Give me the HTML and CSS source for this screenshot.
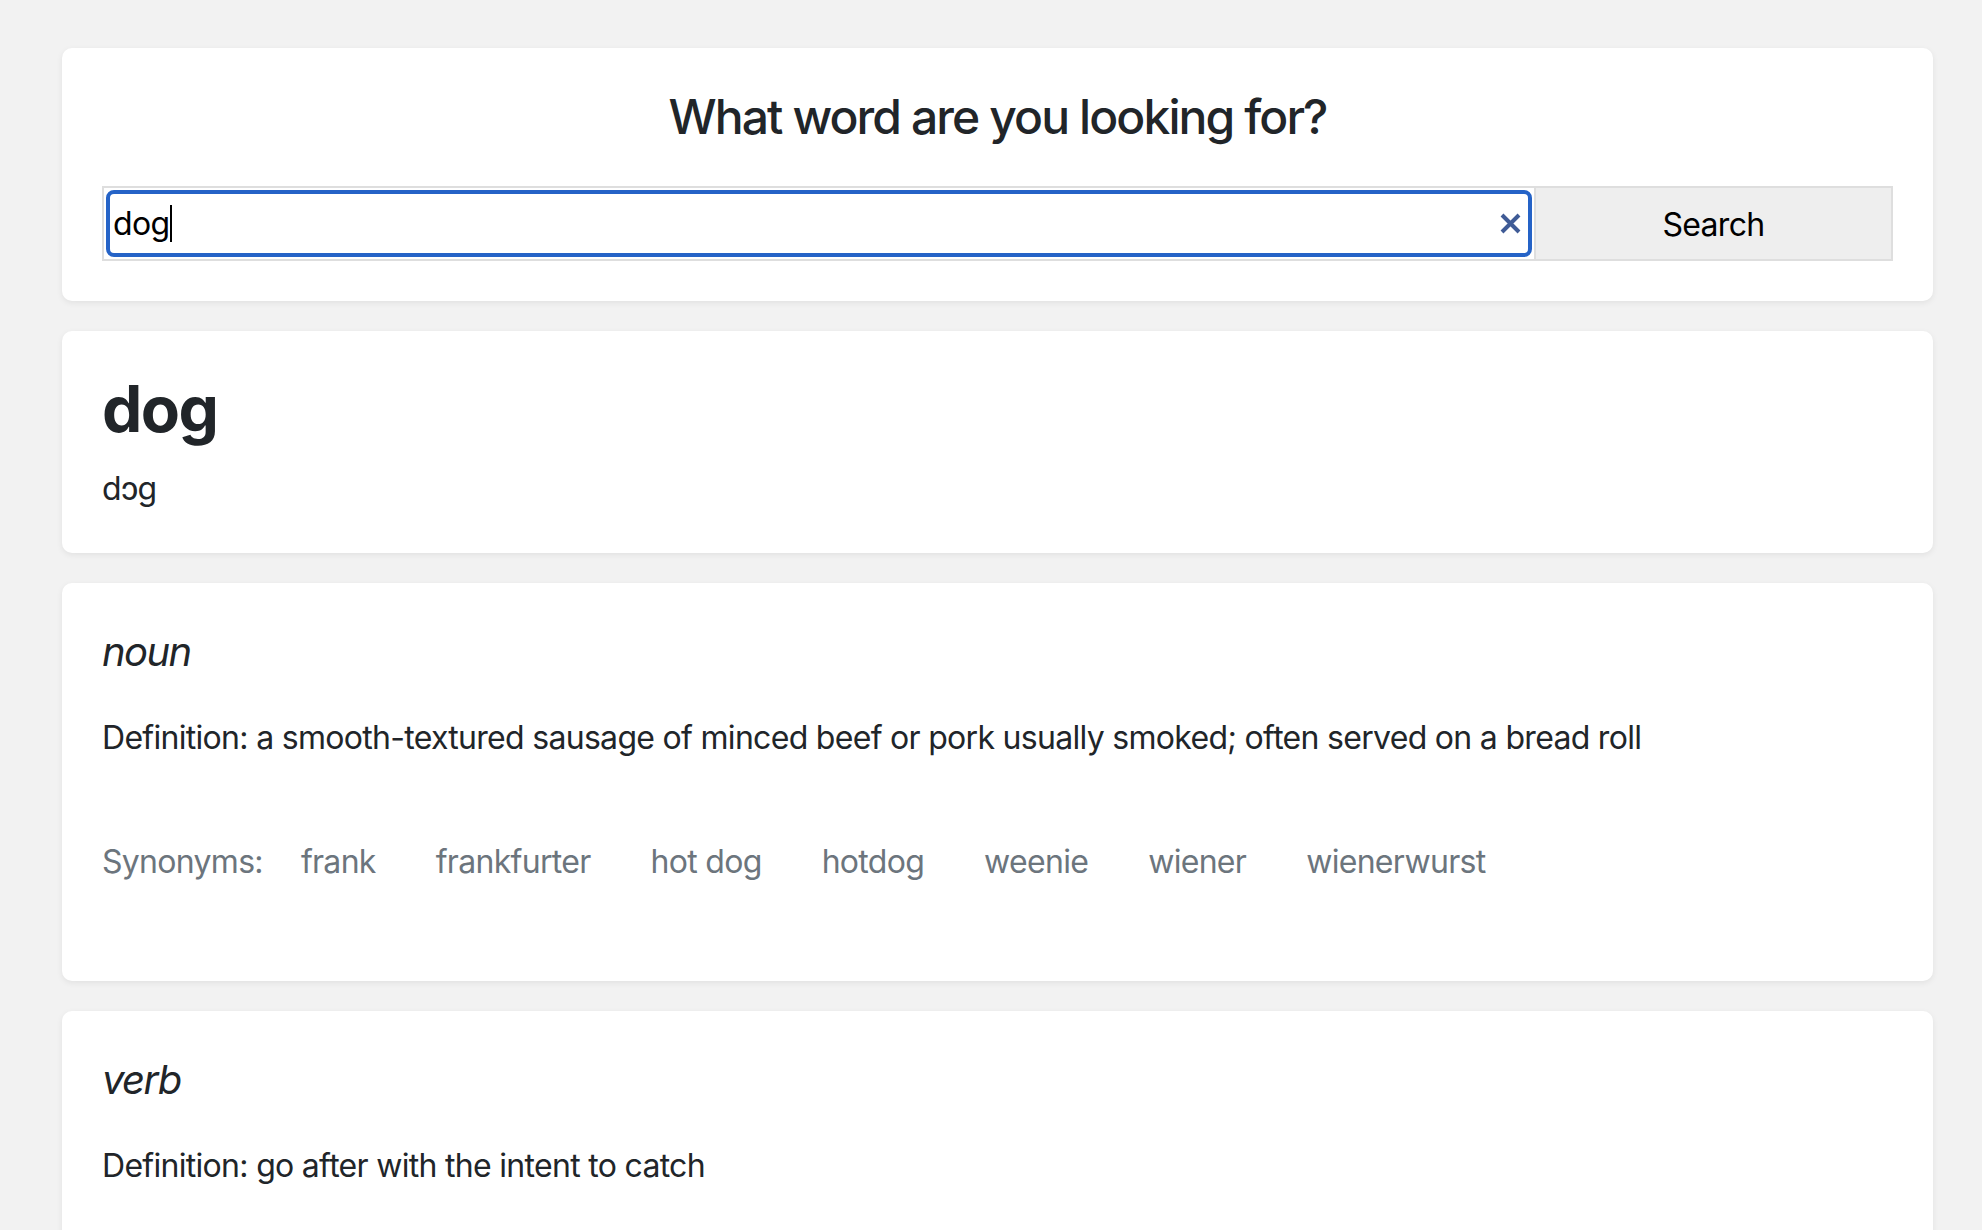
FILE: index.html
```html
<!DOCTYPE html>
<html lang="en">
<head>
<meta charset="utf-8">
<title>Dictionary</title>
<link rel="stylesheet" href="styles.css">
</head>
<body>
<main class="page">
  <section class="card search-card">
    <h2 class="search-title">What word are you looking for?</h2>
    <form class="search-row">
      <div class="field">
        <div class="field-inner">
          <span class="field-text">dog</span><span class="caret"></span>
          <span class="clear" aria-label="clear">
            <svg width="21" height="21" viewBox="0 0 21 21"><path d="M2 2 L19 19 M19 2 L2 19" stroke="#3f5b96" stroke-width="4" fill="none"/></svg>
          </span>
        </div>
      </div>
      <button type="button" class="search-btn">Search</button>
    </form>
  </section>

  <section class="card word-card">
    <h1 class="word">dog</h1>
    <p class="phonetic">dɔg</p>
  </section>

  <section class="card meaning-card">
    <h3 class="pos">noun</h3>
    <p class="definition">Definition: a smooth-textured sausage of minced beef or pork usually smoked; often served on a bread roll</p>
    <div class="synonyms">
      <span class="syn-label">Synonyms:</span>
      <span class="syn">frank</span>
      <span class="syn">frankfurter</span>
      <span class="syn">hot dog</span>
      <span class="syn">hotdog</span>
      <span class="syn">weenie</span>
      <span class="syn">wiener</span>
      <span class="syn">wienerwurst</span>
    </div>
  </section>

  <section class="card meaning-card last">
    <h3 class="pos">verb</h3>
    <p class="definition">Definition: go after with the intent to catch</p>
  </section>
</main>
</body>
</html>
```

FILE: styles.css
```css
* { box-sizing: border-box; }

html, body {
  margin: 0;
  background: #f2f2f2;
}

body {
  font-family: Inter, "Noto Sans", "Liberation Sans", sans-serif;
  font-size: 32px;
  line-height: 1.5;
  letter-spacing: -0.7px;
  color: #212529;
  overflow: hidden;
  height: 1230px;
}

.page {
  padding: 48px 49px 0 62px;
  display: flex;
  flex-direction: column;
  gap: 30px;
}

.card {
  background: #fff;
  border-radius: 10px;
  box-shadow: 0 2px 6px rgba(0, 0, 0, 0.07);
  padding: 40px;
}

.search-title {
  margin: 0 0 40px;
  text-align: center;
  font-size: 48px;
  font-weight: 500;
  line-height: 1.2;
  letter-spacing: -1.9px;
}

.search-row {
  display: flex;
  height: 75px;
  margin: 0;
}

.field {
  flex: 1;
  border: 2px solid #dedede;
  border-right: none;
  padding: 2px;
  background: #fff;
}

.field-inner {
  height: 100%;
  border: 4px solid #2563c7;
  border-radius: 8px;
  display: flex;
  align-items: center;
  padding: 1px 7px 0 3px;
  color: #000;
}

.field-text {
  font-size: 32px;
  line-height: 1;
}

.caret {
  width: 2px;
  height: 37px;
  background: #000;
  margin-left: 1px;
}

.clear {
  margin-left: auto;
  display: flex;
}

.search-btn {
  width: 359px;
  border: 2px solid #dedede;
  background: #eeeeee;
  font-family: inherit;
  font-size: 32px;
  letter-spacing: -0.7px;
  color: #000;
  padding: 2px 0 0;
}

.word {
  margin: 0 0 18px;
  font-size: 64px;
  font-weight: 700;
  line-height: 1.2;
  letter-spacing: -1.5px;
}

.phonetic {
  margin: 0;
}

.meaning-card {
  padding-top: 45px;
  padding-bottom: 0;
  height: 398px;
}

.meaning-card.last {
  height: 400px;
}

.pos {
  margin: 0 0 38px;
  font-size: 40px;
  font-style: italic;
  font-weight: 400;
  line-height: 1.2;
  letter-spacing: -1.6px;
}

.definition {
  margin: 0 0 76px;
}

.synonyms {
  display: flex;
  color: #6c757d;
}

.syn-label {
  margin-right: 38px;
}

.syn {
  margin-right: 60px;
}
```
